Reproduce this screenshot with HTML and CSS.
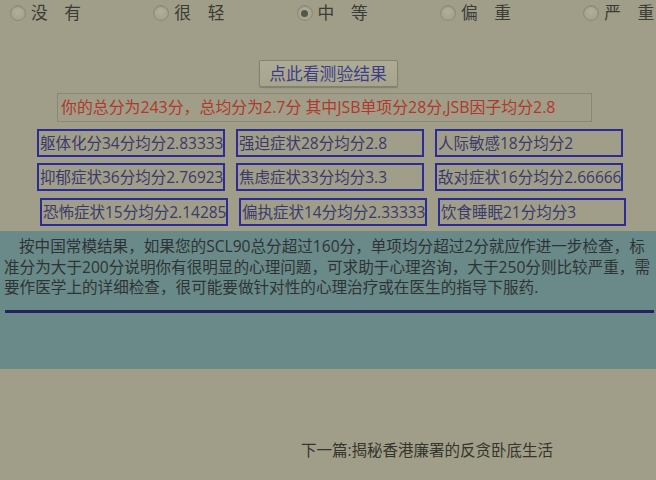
FILE: index.html
```html
<!DOCTYPE html>
<html lang="zh-CN">
<head>
<meta charset="utf-8">
<title>SCL90 测验结果</title>
<link rel="stylesheet" href="styles.css">
</head>
<body>
<div class="page">
  <div class="radios">
    <label class="radio"><span class="dot"></span><span class="lbl">没　有</span></label>
    <label class="radio"><span class="dot"></span><span class="lbl">很　轻</span></label>
    <label class="radio"><span class="dot on"></span><span class="lbl">中　等</span></label>
    <label class="radio"><span class="dot"></span><span class="lbl">偏　重</span></label>
    <label class="radio"><span class="dot"></span><span class="lbl">严　重</span></label>
  </div>

  <div class="btn-row">
    <button class="btn">点此看测验结果</button>
  </div>

  <div class="total">你的总分为243分，总均分为2.7分 其中JSB单项分28分,JSB因子均分2.8</div>

  <div class="grid">
    <div class="row">
      <div class="cell">躯体化分34分均分2.833333</div>
      <div class="cell">强迫症状28分均分2.8</div>
      <div class="cell">人际敏感18分均分2</div>
    </div>
    <div class="row">
      <div class="cell">抑郁症状36分均分2.769230</div>
      <div class="cell">焦虑症状33分均分3.3</div>
      <div class="cell">敌对症状16分均分2.666666</div>
    </div>
    <div class="row shift">
      <div class="cell">恐怖症状15分均分2.142857</div>
      <div class="cell">偏执症状14分均分2.333333</div>
      <div class="cell">饮食睡眠21分均分3</div>
    </div>
  </div>

  <div class="band">
    <p class="note">按中国常模结果，如果您的SCL90总分超过160分，单项均分超过2分就应作进一步检查，标准分为大于200分说明你有很明显的心理问题，可求助于心理咨询，大于250分则比较严重，需要作医学上的详细检查，很可能要做针对性的心理治疗或在医生的指导下服药.</p>
    <div class="rule"></div>
  </div>

  <div class="next">下一篇:揭秘香港廉署的反贪卧底生活</div>
</div>
</body>
</html>
```

FILE: styles.css
```css
html, body {
  margin: 0;
  padding: 0;
  background: #a09e88;
  overflow: hidden;
}
body {
  width: 656px;
  height: 480px;
  font-family: "Open Sans", "Noto Sans CJK SC", sans-serif;
}
.page {
  display: flex;
  flex-direction: column;
  width: 656px;
  overflow: hidden;
}

/* radio row */
.radios {
  display: flex;
  padding-left: 10px;
  height: 26px;
  align-items: center;
  white-space: nowrap;
  overflow: hidden;
}
.radio {
  flex: 0 0 143.3px;
  display: flex;
  align-items: center;
  gap: 5px;
}
.dot {
  width: 16px;
  height: 16px;
  box-sizing: border-box;
  border-radius: 50%;
  border: 1px solid #8d8b77;
  background: radial-gradient(circle at 50% 40%, #b1af99 0%, #a5a38d 70%, #96947f 100%);
  box-shadow: inset 0 1px 1px rgba(0,0,0,0.15);
  display: flex;
  align-items: center;
  justify-content: center;
}
.dot.on::after {
  content: "";
  width: 7px;
  height: 7px;
  border-radius: 50%;
  background: #55554c;
}
.lbl {
  font-size: 16.7px;
  color: #3b3b36;
  line-height: 20px;
}

/* button */
.btn-row {
  display: flex;
  justify-content: center;
  margin-top: 34px;
}
.btn {
  width: 139px;
  height: 27px;
  box-sizing: border-box;
  border: 1px solid #84826f;
  border-radius: 2px;
  background: linear-gradient(#aeac95, #a6a48d);
  box-shadow: 0 1px 1px rgba(0,0,0,0.2);
  color: #3e3e88;
  font-family: "Open Sans", "Noto Sans CJK SC", sans-serif;
  font-size: 16.8px;
  padding: 0;
  line-height: 25px;
}

/* total line */
.total {
  margin: 6px 0 0 57px;
  width: 535px;
  height: 29px;
  box-sizing: border-box;
  border: 1px solid #8a8875;
  color: #b0382c;
  font-size: 15.9px;
  line-height: 27px;
  padding-left: 3px;
  white-space: nowrap;
  overflow: hidden;
}

/* grid of factor cells */
.grid {
  display: flex;
  flex-direction: column;
  gap: 6px;
  margin-top: 7px;
  padding-left: 37px;
}
.row {
  display: flex;
  gap: 11px;
}
.row.shift {
  margin-left: 3px;
  margin-top: 1px;
}
.cell {
  width: 188px;
  height: 28px;
  box-sizing: border-box;
  border: 2px solid #2c2c98;
  color: #3a3a6e;
  font-size: 15.5px;
  line-height: 24px;
  padding-left: 1px;
  white-space: nowrap;
  overflow: hidden;
}

/* explanation band */
.band {
  margin-top: 5px;
  background: #6a8989;
  height: 138px;
  padding-top: 5px;
  box-sizing: border-box;
}
.note {
  margin: 0;
  padding: 0 2px 0 4px;
  text-indent: 15px;
  font-size: 15.6px;
  line-height: 20.7px;
  color: #2e3434;
}
.rule {
  margin: 12px 2px 0 5px;
  height: 3px;
  background: #23235e;
}

/* next article link */
.next {
  margin-top: 71px;
  padding-left: 301px;
  font-size: 15.5px;
  color: #35352e;
  line-height: 20px;
}
```
